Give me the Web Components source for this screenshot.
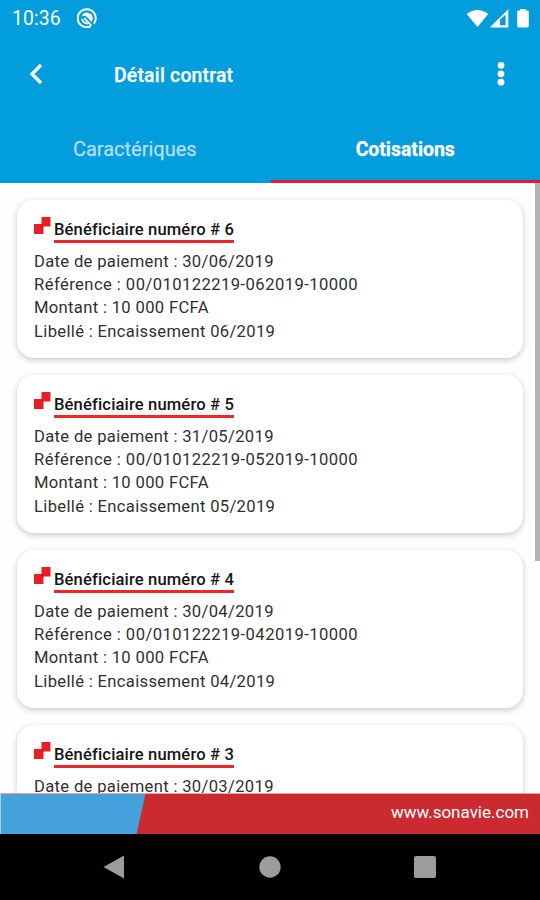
<!DOCTYPE html>
<html lang="fr">
<head>
<meta charset="utf-8">
<title>Détail contrat</title>
<style>
    body {
        margin: 0;
        font-family: Roboto, "Liberation Sans", sans-serif;
        overflow: hidden;
    }
</style>
</head>
<body>

<contract-screen>
    <status-bar slot="top">10:36</status-bar>
    <app-bar slot="top">Détail contrat</app-bar>
    <tab-bar slot="top">
        <tab-item>Caractériques</tab-item>
        <tab-item active>Cotisations</tab-item>
    </tab-bar>
    <payment-card number="6" date="30/06/2019" reference="00/010122219-062019-10000" label="Encaissement 06/2019"></payment-card>
    <payment-card number="5" date="31/05/2019" reference="00/010122219-052019-10000" label="Encaissement 05/2019"></payment-card>
    <payment-card number="4" date="30/04/2019" reference="00/010122219-042019-10000" label="Encaissement 04/2019"></payment-card>
    <payment-card number="3" date="30/03/2019" reference="00/010122219-032019-10000" label="Encaissement 03/2019"></payment-card>
    <site-footer slot="bottom">www.sonavie.com</site-footer>
    <nav-bar slot="bottom"></nav-bar>
</contract-screen>

<script>
// Small helper: every component clones its own template
function define(name, html, setup) {
    const template = document.createElement('template');
    template.innerHTML = html;

    customElements.define(name, class extends HTMLElement {
        constructor() {
            super();
            this.attachShadow({ mode: 'open' }).appendChild(template.content.cloneNode(true));
        }

        connectedCallback() {
            if (setup) setup(this, this.shadowRoot);
        }
    });
}

define('contract-screen', `
<style>
    :host {
        display: flex;
        flex-direction: column;
        width: 540px;
        height: 900px;
        background: #fefefe;
    }

    header {
        flex: none;
        height: 183px;
        background: #029ddd;
        color: #fff;
    }

    main {
        position: relative;
        flex: 1;
        min-height: 0;
        display: flex;
        flex-direction: column;
        gap: 17px;
        padding: 17px 17px 0 17px;
        overflow: hidden;
        box-sizing: border-box;
    }

    .thumb {
        position: absolute;
        top: 0;
        right: 0;
        width: 5px;
        height: 378px;
        background: #b3b3b3;
    }
</style>
<header><slot name="top"></slot></header>
<main>
    <slot></slot>
    <div class="thumb"></div>
</main>
<slot name="bottom"></slot>
`);

define('status-bar', `
<style>
    :host {
        display: flex;
        align-items: center;
        height: 36px;
        padding: 0 11px 0 12px;
        font-size: 19.4px;
        letter-spacing: .1px;
    }

    .app {
        margin-left: 16px;
        margin-top: -1px;
    }

    .system {
        margin-left: auto;
    }

    svg {
        display: block;
    }
</style>
<slot></slot>
<svg class="app" width="20" height="20" viewBox="0 0 20 20">
    <path d="M16.9 15.6A9 9 0 1 0 13.8 18.2" fill="none" stroke="#fff" stroke-width="2"/>
    <path d="M4.6 8.6A5.7 5.7 0 0 1 15.7 9.7Q15.7 12.2 14.6 14L9.4 8.4Q7 6.8 4.6 8.6Z" fill="#fff"/>
    <path d="M5 10.6Q5.8 15.2 10.6 15.6M7.2 10.1L14.4 17.6" fill="none" stroke="#fff" stroke-width="1.8"/>
</svg>
<svg class="system" width="63" height="22" viewBox="0 0 63 22" fill="#fff">
    <path d="M.7 7Q11.5-1.2 22.2 7L11.5 20.1Z"/>
    <path d="M23.7 20.5 42.3 2.3V20.5ZM34 12.6V18.2H39.6V7.8Z" fill-rule="evenodd"/>
    <path d="M51.2 5Q51.2 3.6 52.6 3.6H54.2V2H59.8V3.6H61.4Q62.8 3.6 62.8 5V19Q62.8 20.4 61.4 20.4H52.6Q51.2 20.4 51.2 19Z"/>
</svg>
`);

define('app-bar', `
<style>
    :host {
        display: flex;
        align-items: center;
        height: 78px;
        padding: 0 35px 0 29px;
    }

    .title {
        margin-left: 71px;
        font-size: 19.4px;
        font-weight: 500;
        letter-spacing: .2px;
        -webkit-text-stroke: .25px;
    }

    .back {
        margin-top: -2px;
    }

    .more {
        margin-left: auto;
        margin-top: -3px;
    }
</style>
<svg class="back" width="14" height="22" viewBox="0 0 14 22">
    <path d="M12 2 3 11l9 9" fill="none" stroke="#fff" stroke-width="3.3"/>
</svg>
<div class="title"><slot></slot></div>
<svg class="more" width="8" height="26" viewBox="0 0 8 26" fill="#fff">
    <circle cx="4" cy="4.3" r="3.4"/>
    <circle cx="4" cy="12.8" r="3.4"/>
    <circle cx="4" cy="21.2" r="3.4"/>
</svg>
`);

define('tab-bar', `
<style>
    :host {
        display: flex;
        height: 69px;
    }
</style>
<slot></slot>
`);

define('tab-item', `
<style>
    :host {
        flex: 1;
        display: flex;
        align-items: center;
        justify-content: center;
        box-sizing: border-box;
        padding-top: 3px;
        border-bottom: 3px solid transparent;
        font-size: 20px;
        color: #b9def1;
        -webkit-text-stroke: .25px;
    }

    :host([active]) {
        margin-left: 1px;
        padding-top: 5px;
        border-color: #e31b2b;
        color: #fff;
        font-size: 19.4px;
        font-weight: 700;
    }
</style>
<slot></slot>
`);

define('payment-card', `
<style>
    :host {
        display: block;
        flex: none;
        box-sizing: border-box;
        height: 158px;
        padding: 16px 17px;
        border-radius: 17px;
        background: #fff;
        box-shadow: 0 2px 6px rgba(0, 0, 0, .22);
        color: #303030;
    }

    .head {
        display: flex;
        align-items: flex-start;
        height: 34px;
    }

    .title {
        height: 24px;
        margin-left: 3px;
        border-bottom: 3px solid #ea2629;
        font-size: 16.6px;
        font-weight: 500;
        line-height: 27px;
        letter-spacing: .13px;
        color: #151515;
    }

    .row {
        height: 23.2px;
        line-height: 23px;
        font-size: 16.6px;
        letter-spacing: .33px;
        white-space: nowrap;
    }

    .reference {
        letter-spacing: .44px;
    }
</style>
<div class="head">
    <svg width="17" height="18" viewBox="0 0 17 18" fill="#e91d25">
        <path d="M7.5 1H16.5V10.5H9.5V18H0V8H7.5Z"/>
        <path d="M7.5 8H9.5V10.5H7.5Z" fill="#c8141c"/>
    </svg>
    <div class="title">Bénéficiaire numéro # <span id="number"></span></div>
</div>
<div class="row">Date de paiement : <span id="date"></span></div>
<div class="row reference">Référence : <span id="reference"></span></div>
<div class="row">Montant : 10 000 FCFA</div>
<div class="row">Libellé : <span id="label"></span></div>
`, (host, root) => {
    for (const key of ['number', 'date', 'reference', 'label']) {
        root.getElementById(key).textContent = host.getAttribute(key);
    }
});

define('site-footer', `
<style>
    :host {
        flex: none;
        display: flex;
        align-items: center;
        justify-content: flex-end;
        box-sizing: border-box;
        height: 41px;
        padding: 0 11px 5px 0;
        border-top: 1px solid #e5a3a6;
        border-left: 1px solid #a5cfea;
        background: linear-gradient(102.5deg, #45a1dc 140.5px, #cb2b30 141.5px);
        color: #fff;
        font-size: 17px;
    }
</style>
<slot></slot>
`);

define('nav-bar', `
<style>
    :host {
        flex: none;
        display: flex;
        align-items: center;
        justify-content: space-between;
        box-sizing: border-box;
        height: 66px;
        padding: 0 104px 0 103px;
        background: #000;
    }
</style>
<svg width="22" height="24" viewBox="0 0 22 24"><path d="M.5 12 21 .5V23.5Z" fill="#9c9c9c"/></svg>
<svg width="22" height="22" viewBox="0 0 22 22"><circle cx="11" cy="11" r="10.7" fill="#9c9c9c"/></svg>
<svg width="22" height="22" viewBox="0 0 22 22"><rect width="22" height="22" rx="2" fill="#9c9c9c"/></svg>
`);
</script>
</body>
</html>
